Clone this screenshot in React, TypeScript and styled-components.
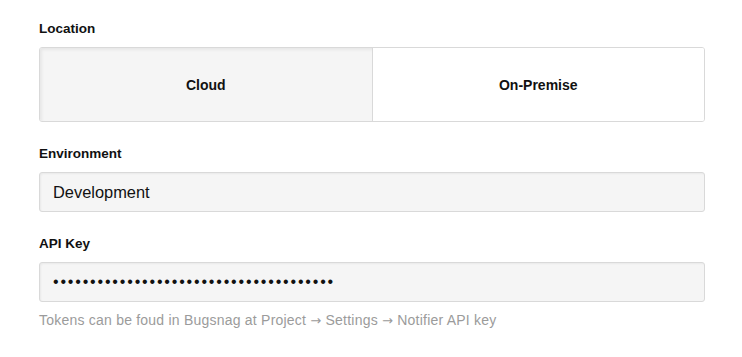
import React, { useState } from "react";
import styled, { createGlobalStyle } from "styled-components";

const Global = createGlobalStyle`
  html, body { margin: 0; padding: 0; background: #fff; }
  body { font-family: "Liberation Sans", Arial, sans-serif; color: #000; }
`;

const Form = styled.div`
  width: 666px;
  padding: 21px 0 0 39px;
  display: flex;
  flex-direction: column;
`;

const Field = styled.div<{ $gap?: number }>`
  display: flex;
  flex-direction: column;
  margin-bottom: ${(p) => p.$gap ?? 0}px;
`;

const Label = styled.label`
  font-size: 13.5px;
  font-weight: bold;
  line-height: 16px;
  margin-bottom: 10px;
  color: #111;
`;

const Segmented = styled.div`
  display: flex;
  height: 75px;
  border: 1px solid #d9d9d9;
  border-radius: 3px;
  overflow: hidden;
  box-sizing: border-box;
`;

const Segment = styled.button<{ $active?: boolean }>`
  flex: 1;
  border: none;
  border-right: ${(p) => (p.$active ? "1px solid #d9d9d9" : "none")};
  background: ${(p) => (p.$active ? "#f5f5f5" : "#fff")};
  box-shadow: ${(p) => (p.$active ? "inset 2px 2px 3px rgba(0,0,0,0.06)" : "none")};
  font-family: inherit;
  font-size: 14px;
  font-weight: bold;
  color: #111;
  cursor: pointer;
  padding: 0;
`;

const Input = styled.input`
  height: 40px;
  box-sizing: border-box;
  border: 1px solid #d9d9d9;
  border-radius: 3px;
  background: #f5f5f5;
  box-shadow: inset 1px 1px 2px rgba(0,0,0,0.05);
  padding: 0 13px;
  font-family: inherit;
  font-size: 16.4px;
  color: #111;
  outline: none;
  width: 100%;
  &[type="password"] { font-size: 16px; letter-spacing: 1.82px; }
`;

const Help = styled.div`
  margin-top: 10px;
  font-size: 14px;
  line-height: 16px;
  letter-spacing: 0.22px;
  color: #9b9b9b;
`;

const Arrow = styled.span`
  font-family: "DejaVu Sans", sans-serif;
  font-size: 13px;
`;

export default function App() {
  const [loc, setLoc] = useState("cloud");
  return (
    <>
      <Global />
      <Form>
        <Field $gap={24}>
          <Label>Location</Label>
          <Segmented>
            <Segment $active={loc === "cloud"} onClick={() => setLoc("cloud")}>Cloud</Segment>
            <Segment $active={loc === "onprem"} onClick={() => setLoc("onprem")}>On-Premise</Segment>
          </Segmented>
        </Field>
        <Field $gap={24}>
          <Label>Environment</Label>
          <Input defaultValue="Development" />
        </Field>
        <Field>
          <Label>API Key</Label>
          <Input type="password" defaultValue="abcdefghijklmnopqrstuvwxyz0123456789ab" />
          <Help>
            Tokens can be foud in Bugsnag at Project <Arrow>→</Arrow> Settings <Arrow>→</Arrow> Notifier API key
          </Help>
        </Field>
      </Form>
    </>
  );
}
